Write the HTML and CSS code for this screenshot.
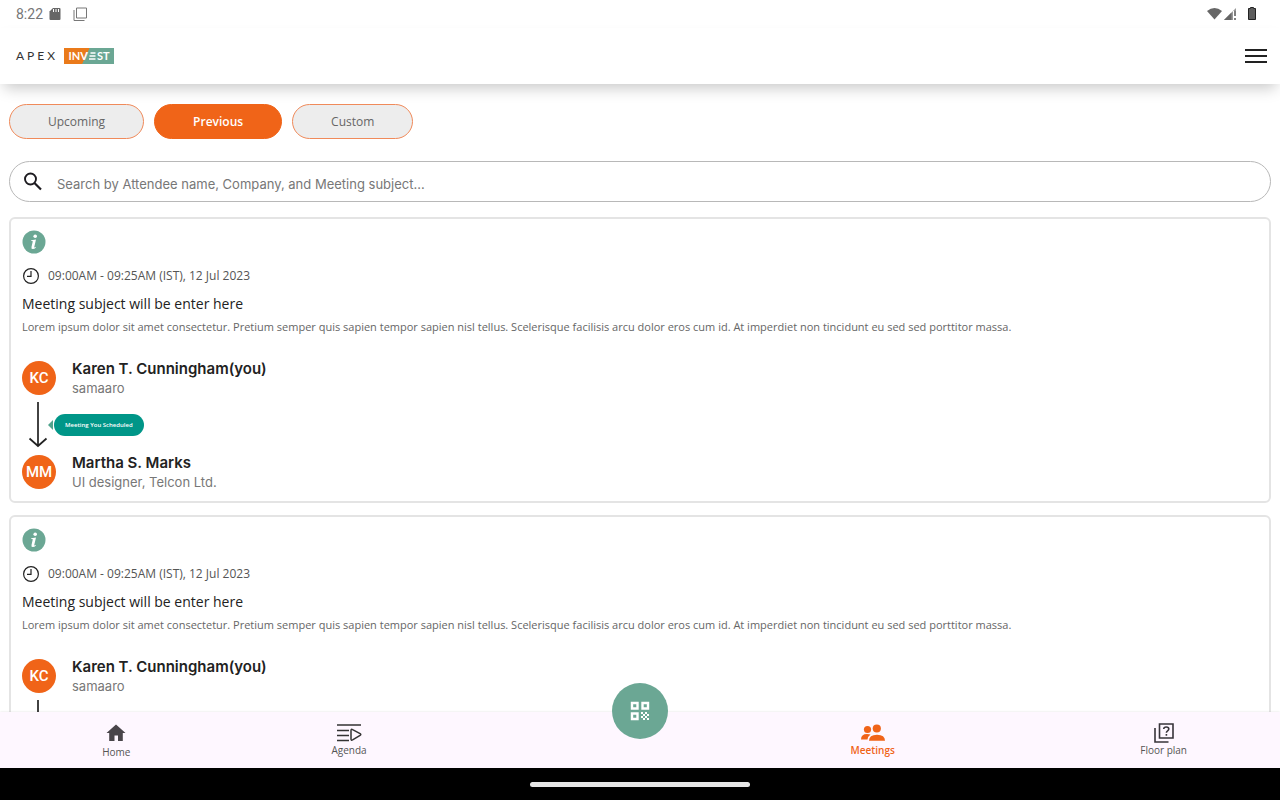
FILE: index.html
```html
<!DOCTYPE html>
<html lang="en">
<head>
<meta charset="utf-8">
<meta name="viewport" content="width=device-width, initial-scale=1">
<title>Meetings - Apex Invest</title>
<link rel="stylesheet" href="styles.css">
</head>
<body>
<svg class="defs" aria-hidden="true">
  <symbol id="clock" viewBox="0 0 18 18"><circle cx="9" cy="9" r="7.4" fill="none" stroke="#222" stroke-width="1.2"/><path d="M9 4v5.3H5" fill="none" stroke="#222" stroke-width="1.2"/></symbol>
  <symbol id="arrow" viewBox="0 0 20 48"><path d="M10 1v44M1.500 37.500 10 45l8.500-7.500" fill="none" stroke="#222" stroke-width="1.700"/></symbol>
  <symbol id="info" viewBox="0 0 24 24"><circle cx="12" cy="12" r="11.500" fill="#6ba794"/><circle cx="13.200" cy="6.300" r="1.800" fill="#fff"/><path d="M9.300 10.200 14 9.500 12.300 16.700q-.2 1 .5.700l1.200-.6-.3 1q-1.300 1.300-2.800 1.300-1.900 0-1.400-2.200l1.200-5.100q.2-.8-.5-.8h-1.100z" fill="#fff"/></symbol>
</svg>

<div class="status">
  <span class="time">8:22</span>
  <svg width="12" height="14" viewBox="0 0 12 14"><path d="M4 1h6.500q1 0 1 1v10q0 1-1 1h-9q-1 0-1-1V4.500z" fill="#666"/><path d="M4.500 2v3M7 2v3M9.500 2v3" stroke="#fff"/></svg>
  <svg class="windows" width="14" height="14" viewBox="0 0 14 14"><path d="M3.500 1h10v10h-10zM1 3v10.500h10.500" fill="none" stroke="#777" stroke-width="1"/></svg>
  <span class="spacer"></span>
  <svg width="50" height="16" viewBox="0 0 50 16"><path d="M0 5q7.500-6 15 0l-7.500 8.500z" fill="#666"/><path d="M17 14 29 2v12z" fill="#999"/><path d="M17 14 24.500 6.500V14z" fill="#666"/><path d="M26 5h4v9h-4z" fill="#fff"/><path d="M28 5v5M28 12v2" stroke="#555" stroke-width="1.500"/><path d="M41.500 2.500h2v-1h3v1h2v11h-7z" fill="#5d5d5d" stroke="#222"/></svg>
</div>

<header class="header">
  <a class="brand" href="#" aria-label="Apex Invest">
    <span class="apex">APEX</span>
    <span class="invest">INV<svg width="7" height="8" viewBox="0 0 7 8"><path d="M1.500 1H6.500M.5 4h6M0 7h6.500" stroke="#fff" stroke-width="1.300"/></svg>ST</span>
  </a>
  <button class="menu" type="button" aria-label="Open menu">
    <svg width="22" height="16" viewBox="0 0 22 16"><path d="M0 2h22M0 8h22M0 14h22" stroke="#222" stroke-width="2"/></svg>
  </button>
</header>

<main class="content">
  <div class="tabs">
    <button class="tab" type="button">Upcoming</button>
    <button class="tab active" type="button">Previous</button>
    <button class="tab" type="button">Custom</button>
  </div>

  <label class="search">
    <svg width="20" height="20" viewBox="0 0 20 20"><circle cx="7.500" cy="7" r="5.500" fill="none" stroke="#1d1b20" stroke-width="1.900"/><path d="m11.500 11 6.500 6.500" stroke="#1d1b20" stroke-width="2.200"/></svg>
    <input type="text" aria-label="Search meetings" placeholder="Search by Attendee name, Company, and Meeting subject…">
  </label>

  <article class="card">
    <button class="info" type="button" aria-label="Meeting information"><svg width="24" height="24"><use href="#info"/></svg></button>
    <p class="when"><svg width="18" height="18"><use href="#clock"/></svg>09:00AM - 09:25AM (IST), 12 Jul 2023</p>
    <h2 class="subject">Meeting subject will be enter here</h2>
    <p class="desc">Lorem ipsum dolor sit amet consectetur. Pretium semper quis sapien tempor sapien nisl tellus. Scelerisque facilisis arcu dolor eros cum id. At imperdiet non tincidunt eu sed sed porttitor massa.</p>
    <div class="person">
      <span class="avatar">KC</span>
      <div><h3 class="name">Karen T. Cunningham(you)</h3><p class="role">samaaro</p></div>
    </div>
    <div class="link"><svg width="20" height="48"><use href="#arrow"/></svg><span class="pointer"></span><span class="badge">Meeting You Scheduled</span></div>
    <div class="person">
      <span class="avatar">MM</span>
      <div><h3 class="name">Martha S. Marks</h3><p class="role">UI designer, Telcon Ltd.</p></div>
    </div>
  </article>

  <article class="card">
    <button class="info" type="button" aria-label="Meeting information"><svg width="24" height="24"><use href="#info"/></svg></button>
    <p class="when"><svg width="18" height="18"><use href="#clock"/></svg>09:00AM - 09:25AM (IST), 12 Jul 2023</p>
    <h2 class="subject">Meeting subject will be enter here</h2>
    <p class="desc">Lorem ipsum dolor sit amet consectetur. Pretium semper quis sapien tempor sapien nisl tellus. Scelerisque facilisis arcu dolor eros cum id. At imperdiet non tincidunt eu sed sed porttitor massa.</p>
    <div class="person">
      <span class="avatar">KC</span>
      <div><h3 class="name">Karen T. Cunningham(you)</h3><p class="role">samaaro</p></div>
    </div>
    <div class="link"><svg width="20" height="48"><use href="#arrow"/></svg></div>
  </article>
</main>

<nav class="nav">
  <a class="item" href="#"><svg width="20" height="20" viewBox="0 0 20 20"><path d="M10 1.500 19.500 10h-2.700v8H12v-5.500H8.500V18H3.200v-8H.5z" fill="#49454a"/></svg>Home</a>
  <a class="item raised" href="#"><svg width="26" height="20" viewBox="0 0 26 20"><path d="M1 2h24M1 7.500h12M1 12.500h12M1 17.500h12" stroke="#333" stroke-width="1.600"/><path d="M15 7.500q0-1.800 1.600-.9l7.500 4q1.400.9 0 1.800l-7.500 4.500q-1.600.8-1.600-1z" fill="none" stroke="#333" stroke-width="1.500"/></svg>Agenda</a>
  <a class="item raised current" href="#"><svg width="24" height="20" viewBox="0 0 24 20"><circle cx="6.500" cy="6.500" r="3.600"/><circle cx="15.800" cy="5.500" r="4.100"/><path d="M8 17.800q0-6 8-6t8 6zM0 16.500q0-5.500 6-5.500 2 0 3.500.6-2.700 2-3 4.900z"/></svg>Meetings</a>
  <a class="item last" href="#"><svg width="20" height="20" viewBox="0 0 20 20"><path d="M5.500 1h13.500v14H5.500zM1 5v14h13.500" fill="none" stroke="#37343a" stroke-width="1.600"/><path d="M9.700 6q.2-2 2.500-2 2.600 0 2.600 2 0 1-1.200 1.800-1.200.8-1.200 1.900M12.400 11v1.800" fill="none" stroke="#37343a" stroke-width="1.600"/></svg>Floor plan</a>
  <button class="scan" type="button" aria-label="Scan QR code">
    <svg width="20" height="20" viewBox="0 0 20 20"><path d="M2 2h5.500v5.500H2zM12.500 2H18v5.500h-5.500zM2 12.500h5.500V18H2z" fill="none" stroke="#fff" stroke-width="2.400"/><path d="M11 11h2v2h-2zM15 11h2v2h-2zM13 13h2v2h-2zM17 13h2v2h-2zM11 15h2v2h-2zM15 15h2v2h-2zM13 17h2v2h-2zM17 17h2v2h-2z" fill="#fff"/></svg>
  </button>
</nav>
<div class="system"><span class="handle"></span></div>
</body>
</html>
```
FILE: styles.css
```css
* { box-sizing: border-box; }

body {
  margin: 0;
  height: 100vh;
  display: flex;
  flex-direction: column;
  background: #fff;
  color: #222;
  font-family: "Open Sans", sans-serif;
}

h2, h3, p { margin: 0; }
button { padding: 0; border: 0; background: none; font: inherit; cursor: pointer; }
a { color: inherit; text-decoration: none; }
svg { display: block; flex: none; }
.defs { position: absolute; width: 0; height: 0; }

.status {
  display: flex;
  align-items: center;
  gap: 6px;
  padding: 0 23px 0 16px;
  height: 28px;
  flex: none;
}
.time { font: 14px/28px Roboto, sans-serif; color: #777; }
.windows { margin-left: 6px; }
.spacer { flex: 1; }

.header {
  display: flex;
  align-items: center;
  justify-content: space-between;
  height: 56px;
  flex: none;
  padding: 0 13px 0 16px;
  position: relative;
  background: #fff;
  box-shadow: 0 8px 14px -4px rgba(0, 0, 0, 0.22);
}
.brand { display: flex; align-items: center; gap: 6px; }
.apex { font: 12px/16px Lato, sans-serif; letter-spacing: 3px; color: #333; }
.invest {
  display: flex;
  align-items: center;
  justify-content: center;
  gap: 1px;
  width: 50px;
  height: 16px;
  background: linear-gradient(115deg, #ea7a1a 44%, #6ba794 45%);
  color: #fff;
  font: bold 11px/16px Lato, sans-serif;
}

.content {
  flex: 1;
  min-height: 0;
  overflow: hidden;
  padding: 20px 9px 0;
}
.tabs { display: flex; gap: 10px; }
.tab {
  height: 35px;
  padding: 0 38px;
  border: 1px solid #f08a5a;
  border-radius: 18px;
  background: #ededed;
  color: #666;
  font-size: 12px;
}
.tab.active { background: #f06418; border-color: #f06418; color: #fff; font-weight: 600; }

.search {
  display: flex;
  align-items: center;
  gap: 14px;
  height: 41px;
  margin-top: 22px;
  padding: 0 13px;
  border: 1px solid #b8b8b8;
  border-radius: 21px;
}
.search input {
  flex: 1;
  min-width: 0;
  padding: 5px 0 0;
  border: 0;
  outline: 0;
  background: none;
  font: 13px/20px Inter, sans-serif;
  color: #222;
}
.search input::placeholder { color: #777; opacity: 1; }

.card {
  margin-top: 15px;
  padding: 11px 11px 10px;
  border: 2px solid #e4e4e4;
  border-radius: 6px;
}
.card + .card { margin-top: 12px; }
.info { display: block; }
.when {
  display: flex;
  align-items: center;
  gap: 8px;
  margin-top: 12px;
  line-height: 20px;
  font-size: 12px;
  color: #555;
}
.subject { margin-top: 7px; font-size: 14px; line-height: 22px; font-weight: 500; color: #222; }
.desc { margin-top: 2px; font-size: 11px; line-height: 20px; color: #666; }

.person { display: flex; align-items: center; gap: 16px; height: 38px; }
.desc + .person { margin-top: 22px; }
.avatar {
  display: grid;
  place-items: center;
  width: 34px;
  height: 34px;
  border-radius: 50%;
  background: #f06418;
  color: #fff;
  font: 500 15px/20px Roboto, sans-serif;
}
.name { font: 600 15px/20px Inter, sans-serif; color: #222; }
.role { font: 13px/18px Inter, sans-serif; color: #777; }
.link { display: flex; align-items: center; height: 56px; padding-left: 6px; }
.pointer {
  border: 5px solid transparent;
  border-left: 0;
  border-right-color: #4fa38c;
  margin-right: 1px;
}
.badge {
  height: 22px;
  padding: 0 11px;
  border-radius: 11px;
  background: #009688;
  color: #fff;
  font-size: 6px;
  font-weight: 600;
  line-height: 22px;
}

.nav {
  position: relative;
  display: grid;
  grid-template-columns: 4fr 4fr 5fr 4fr 1fr 4fr;
  height: 56px;
  flex: none;
  background: #fef7ff;
  box-shadow: 0 0 2px rgba(0, 0, 0, 0.12);
  color: #555;
  font-size: 10px;
  line-height: 14px;
}
.item { display: flex; flex-direction: column; align-items: center; gap: 2px; padding-top: 11px; }
.raised { gap: 0; }
.current { grid-column: 4; color: #f06418; fill: #f06418; font-weight: 600; }
.last { grid-column: 6; gap: 0; }
.scan {
  position: absolute;
  left: 50%;
  bottom: 29px;
  display: grid;
  place-items: center;
  width: 56px;
  height: 56px;
  margin-left: -28px;
  border-radius: 50%;
  background: #6ba794;
}

.system { display: grid; place-items: center; height: 32px; flex: none; background: #000; }
.handle { width: 220px; height: 5px; border-radius: 3px; background: #e6e6e6; }
```
